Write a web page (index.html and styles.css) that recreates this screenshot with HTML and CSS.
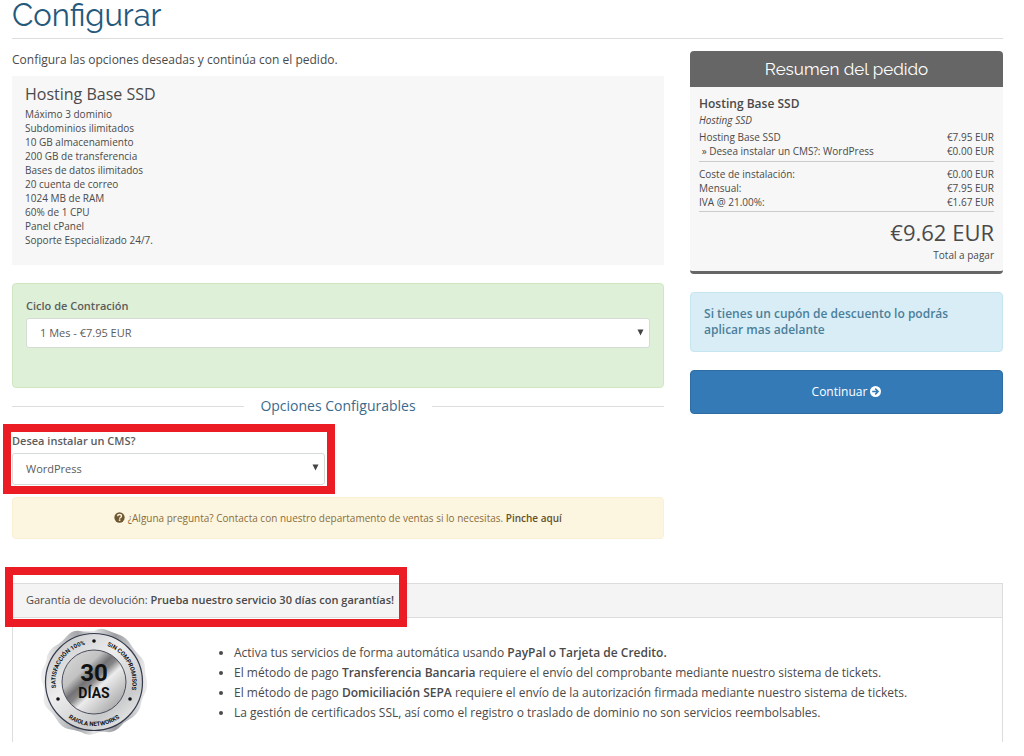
FILE: index.html
```
<!DOCTYPE html>
<html lang="es">
<head>
  <meta charset="UTF-8">
  <meta name="viewport" content="width=device-width, initial-scale=1">
  <title>Configurar</title>
  <link rel="stylesheet" href="styles.css">
</head>
<body>
  <div class="page">
    <h1>Configurar</h1>

    <form class="columns">
      <div class="main">
        <p class="intro">Configura las opciones deseadas y continúa con el pedido.</p>

        <div class="product-info">
          <h2>Hosting Base SSD</h2>
          <p>
            Máximo 3 dominio<br>
            Subdominios ilimitados<br>
            10 GB almacenamiento<br>
            200 GB de transferencia<br>
            Bases de datos ilimitados<br>
            20 cuenta de correo<br>
            1024 MB de RAM<br>
            60% de 1 CPU<br>
            Panel cPanel<br>
            Soporte Especializado 24/7.
          </p>
        </div>

        <div class="alert alert-success">
          <label for="billingcycle">Ciclo de Contración</label>
          <div class="select-wrap">
            <select id="billingcycle" name="billingcycle">
              <option>1 Mes - €7.95 EUR</option>
            </select>
            <svg class="caret" viewBox="0 0 7 7"><path d="M0.500 0.500h6L3.500 6.500z"/></svg>
          </div>
        </div>

        <div class="sub-heading"><span>Opciones Configurables</span></div>

        <div class="option">
          <label for="cms">Desea instalar un CMS?</label>
          <div class="select-wrap">
            <select id="cms" name="cms">
              <option>WordPress</option>
            </select>
            <svg class="caret" viewBox="0 0 7 7"><path d="M0.500 0.500h6L3.500 6.500z"/></svg>
          </div>
          <div class="marker marker-option"></div>
        </div>

        <div class="alert alert-warning">
          <svg class="icon" viewBox="0 0 16 16">
            <circle cx="8" cy="8" r="7.500" fill="#6f5732"/>
            <path d="M5.200 6.200C5.300 4.400 6.400 3.600 8 3.600c1.700 0 2.900 0.900 2.900 2.400 0 2-2.700 1.900-2.700 3.700" fill="none" stroke="#fcf6e1" stroke-width="2"/>
            <rect x="7" y="10.700" width="2.300" height="2.200" fill="#fcf6e1"/>
          </svg>
          ¿Alguna pregunta? Contacta con nuestro departamento de ventas si lo necesitas.
          <a href="#">Pinche aquí</a>
        </div>
      </div>

      <div class="sidebar">
        <div class="summary">
          <h2>Resumen del pedido</h2>
          <div class="summary-body">
            <h3>Hosting Base SSD</h3>
            <em>Hosting SSD</em>
            <div class="line"><span>Hosting Base SSD</span><span>€7.95 EUR</span></div>
            <div class="line"><span>&nbsp;» Desea instalar un CMS?: WordPress</span><span>€0.00 EUR</span></div>
            <div class="totals">
              <div class="line"><span>Coste de instalación:</span><span>€0.00 EUR</span></div>
              <div class="line"><span>Mensual:</span><span>€7.95 EUR</span></div>
              <div class="line"><span>IVA @ 21.00%:</span><span>€1.67 EUR</span></div>
            </div>
            <div class="amount">€9.62 EUR</div>
            <div class="amount-label">Total a pagar</div>
          </div>
        </div>

        <div class="alert alert-info">Si tienes un cupón de descuento lo podrás aplicar mas adelante</div>

        <button type="submit" class="btn">
          Continuar
          <svg class="icon" viewBox="0 0 16 16">
            <circle cx="8" cy="8" r="8" fill="#fff"/>
            <path d="M3.200 8h8M7.600 3.800L11.800 8l-4.200 4.200" fill="none" stroke="#337ab7" stroke-width="2.200"/>
          </svg>
        </button>
      </div>
    </form>

    <div class="panel">
      <div class="panel-heading">
        Garantía de devolución: <strong>Prueba nuestro servicio 30 días con garantías!</strong>
        <div class="marker marker-panel"></div>
      </div>
      <div class="panel-body">
        <svg class="seal" viewBox="0 0 108 108">
          <defs>
            <linearGradient id="edge" x1="0" y1="0" x2="1" y2="0">
              <stop offset="0" stop-color="#f4f4f5"/>
              <stop offset="0.350" stop-color="#a3a5a8"/>
              <stop offset="0.500" stop-color="#e6e6e7"/>
              <stop offset="0.700" stop-color="#9b9da0"/>
              <stop offset="1" stop-color="#eeeeef"/>
            </linearGradient>
            <linearGradient id="ring" x1="0.100" y1="0" x2="0.900" y2="1">
              <stop offset="0" stop-color="#c4c5c7"/>
              <stop offset="0.400" stop-color="#ededee"/>
              <stop offset="0.750" stop-color="#c9cacb"/>
              <stop offset="1" stop-color="#f3f3f3"/>
            </linearGradient>
            <linearGradient id="metal" x1="0.100" y1="0.100" x2="0.850" y2="0.900">
              <stop offset="0" stop-color="#d5d5d6"/>
              <stop offset="0.280" stop-color="#c2c2c3"/>
              <stop offset="0.420" stop-color="#737375"/>
              <stop offset="0.500" stop-color="#858587"/>
              <stop offset="0.620" stop-color="#ececec"/>
              <stop offset="1" stop-color="#a9a9ab"/>
            </linearGradient>
            <path id="arc-left" d="M16 60A38.500 38.500 0 0 1 54 15.500"/>
            <path id="arc-right" d="M67 17.800A38.500 38.500 0 0 1 88 72"/>
            <path id="arc-bottom" d="M15 75A44.500 44.500 0 0 0 93 75"/>
          </defs>
          <path fill="url(#edge)" d="M54 3Q61-1 68 2.500Q74 5 80 7Q87 10 91 17Q94 22 99 27Q105 32 105 40Q105 47 107 53Q108 61 104 67Q101 73 100 80Q97 87 90 91Q84 94 80 99Q74 105 67 104Q60 103 54 106Q47 108 41 104Q35 102 28 101Q21 99 17 92Q14 86 8 81Q2 75 4 67Q5 60 2 54Q-1 47 3 40Q7 34 7 28Q10 20 17 17Q23 13 27 8Q32 2 40 3Q47 4 54 3Z"/>
          <circle cx="54" cy="54" r="48.500" fill="url(#ring)" stroke="#34394a" stroke-width="1.200"/>
          <circle cx="54" cy="54" r="32" fill="url(#metal)" stroke="#4a4e5b" stroke-width="1"/>
          <g class="seal-ring-text">
            <text><textPath href="#arc-left">SATISFACCIÓN 100%</textPath></text>
            <text><textPath href="#arc-right">SIN COMPROMISOS</textPath></text>
            <text text-anchor="middle"><textPath href="#arc-bottom" startOffset="50%">RAIOLA NETWORKS</textPath></text>
          </g>
          <g fill="#111">
            <circle cx="54" cy="13" r="1.800"/>
            <circle cx="18" cy="71" r="1.800"/>
            <circle cx="90" cy="71" r="1.800"/>
          </g>
          <text class="seal-number" x="54" y="53">30</text>
          <text class="seal-days" x="54" y="70">DÍAS</text>
        </svg>
        <ul>
          <li>Activa tus servicios de forma automática usando <strong>PayPal o Tarjeta de Credito.</strong></li>
          <li>El método de pago <strong>Transferencia Bancaria</strong> requiere el envío del comprobante mediante nuestro sistema de tickets.</li>
          <li>El método de pago <strong>Domiciliación SEPA</strong> requiere el envío de la autorización firmada mediante nuestro sistema de tickets.</li>
          <li>La gestión de certificados SSL, así como el registro o traslado de dominio no son servicios reembolsables.</li>
        </ul>
      </div>
    </div>
  </div>
</body>
</html>
```
FILE: styles.css
```
* {
  box-sizing: border-box;
}

body {
  margin: 0;
  background: #fff;
  font-family: "Open Sans", sans-serif;
  font-size: 12px;
  line-height: 20px;
  color: #4a4a4a;
}

h1, h2, h3, p, ul {
  margin: 0;
}

strong, label {
  font-weight: 600;
}

.page {
  padding: 0 21px 0 12px;
}

h1 {
  height: 39px;
  border-bottom: 1px solid #ddd;
  font-family: Raleway, Lato, sans-serif;
  font-size: 31px;
  font-weight: 400;
  line-height: 30px;
  color: #24597c;
}

.columns {
  display: flex;
  gap: 26px;
  padding-top: 12px;
}

.main {
  flex: 25;
  min-width: 0;
}

.sidebar {
  flex: 12;
  min-width: 0;
}

.intro {
  margin-bottom: 7px;
  line-height: 18px;
}

.product-info {
  margin-bottom: 18px;
  padding: 7px 13px 18px;
  background: #f7f7f7;
}

.product-info h2 {
  margin-bottom: 2px;
  font-size: 16px;
  font-weight: 400;
  line-height: 22px;
}

.product-info p {
  font-size: 10px;
  line-height: 14px;
}

.alert {
  border: 1px solid;
  border-radius: 4px;
  padding: 13px;
}

.alert-success {
  padding: 12px 13px 39px;
  border-color: #d0e6c3;
  background: #dff0d8;
}

label {
  display: block;
  margin-bottom: 2px;
  font-size: 11px;
  color: #5c5c5c;
}

.select-wrap {
  position: relative;
}

select {
  display: block;
  width: 100%;
  height: 30px;
  padding: 0 13px;
  border: 1px solid #d5dbd5;
  border-radius: 3px;
  background: #fff;
  font: inherit;
  font-size: 11px;
  color: #5c5c5c;
  appearance: none;
}

.caret {
  position: absolute;
  top: 11px;
  right: 6px;
  width: 7px;
  height: 7px;
  fill: #444;
}

.sub-heading {
  display: flex;
  align-items: center;
  gap: 16px;
  margin: 8px 0 15px;
  font-size: 14px;
  color: #3b6b8c;
}

.sub-heading::before,
.sub-heading::after {
  content: "";
  flex: 1;
  border-top: 1px solid #ddd;
}

.option {
  position: relative;
  width: 48%;
  margin-bottom: 12px;
}

.option select {
  height: 32px;
}

/* red frames around the highlighted areas */
.marker {
  position: absolute;
  border: 8px solid #ec1c24;
  pointer-events: none;
}

.marker-option {
  inset: -7px -10px -9px -9px;
}

.marker-panel {
  top: -17px;
  bottom: -10px;
  left: -8px;
  width: 402px;
}

.alert-warning {
  padding: 10px;
  border-color: #faf0d5;
  background: #fcf6e1;
  font-size: 10px;
  text-align: center;
  color: #8a6d3b;
}

.alert-warning a {
  font-weight: 600;
  color: #66512c;
  text-decoration: none;
}

.icon {
  width: 11px;
  height: 11px;
  vertical-align: -1px;
}

.summary {
  margin-bottom: 18px;
  border-bottom: 3px solid #666;
  border-radius: 4px;
  background: #f7f7f7;
}

.summary h2 {
  border-radius: 4px 4px 0 0;
  background: #666;
  font-family: Raleway, Lato, sans-serif;
  font-size: 17px;
  font-weight: 400;
  line-height: 36px;
  text-align: center;
  color: #fff;
}

.summary-body {
  padding: 8px 9px;
  font-size: 10px;
  line-height: 14px;
}

.summary h3 {
  font-size: 12px;
  font-weight: 600;
  line-height: 18px;
}

.summary em {
  display: block;
  margin-bottom: 3px;
}

.line {
  display: flex;
  justify-content: space-between;
}

.totals {
  margin: 3px 0 5px;
  padding: 5px 0 2px;
  border: solid #ccc;
  border-width: 1px 0;
}

.amount {
  font-size: 22px;
  line-height: 30px;
  text-align: right;
}

.amount-label {
  line-height: 16px;
  text-align: right;
}

.alert-info {
  margin-bottom: 18px;
  border-color: #c5e5ef;
  background: #d9edf7;
  font-weight: 600;
  line-height: 16px;
  color: #4a7f9a;
}

.btn {
  display: block;
  width: 100%;
  padding: 11px;
  border: 1px solid #2e6da4;
  border-radius: 4px;
  background: #337ab7;
  font: inherit;
  color: #fff;
  cursor: pointer;
}

.panel {
  margin-top: 44px;
  border: 1px solid #ddd;
  border-bottom: 0;
}

.panel-heading {
  position: relative;
  padding: 6px 13px 7px;
  border-bottom: 1px solid #ddd;
  background: #f4f4f4;
  font-size: 11px;
}

.panel-body {
  display: flex;
  gap: 64px;
  padding: 10px 27px 6px;
}

.seal {
  flex: none;
  width: 108px;
  height: 108px;
}

.seal text {
  font-family: Roboto, sans-serif;
  font-weight: 700;
  fill: #111;
}

.seal-ring-text text {
  font-size: 6px;
}

.seal .seal-number {
  font-size: 24px;
  text-anchor: middle;
}

.seal .seal-days {
  font-size: 14px;
  text-anchor: middle;
}

.panel-body ul {
  padding: 15px 0 0 22px;
}
```
